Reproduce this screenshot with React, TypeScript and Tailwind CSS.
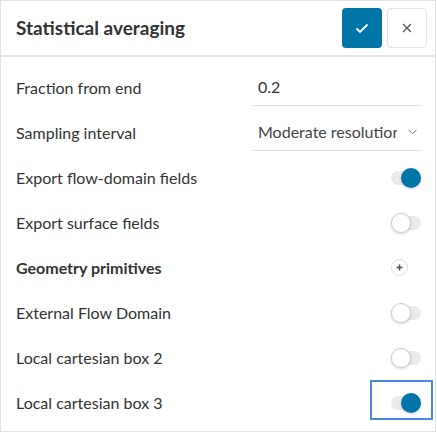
import React, { useState } from 'react';

const font = { fontFamily: 'Lato, "Noto Sans", sans-serif' };

interface ToggleProps {
  on: boolean;
  focused?: boolean;
  onChange: () => void;
}

const Toggle = ({ on, focused, onChange }: ToggleProps) => (
  <button onClick={onChange} className="relative flex h-5 w-[30px] items-center">
    <span className="absolute left-0 right-0 h-[14px] rounded-full bg-[#ebebeb]" />
    <span
      className={`absolute h-5 w-5 rounded-full shadow-[0_1px_3px_rgba(0,0,0,0.18)] ${
        on ? 'right-0 bg-[#0275a8]' : 'left-0 border border-[#cfcfcf] bg-white'
      }`}
    />
    {focused && (
      <span className="pointer-events-none absolute -left-[21px] -right-[12px] -top-[13px] -bottom-[7px] border-2 border-[#4a86e4]" />
    )}
  </button>
);

export default function App() {
  const [flow, setFlow] = useState(true);
  const [surface, setSurface] = useState(false);
  const [external, setExternal] = useState(false);
  const [box2, setBox2] = useState(false);
  const [box3, setBox3] = useState(true);

  const Row = ({ label, bold, children }: { label: string; bold?: boolean; children?: React.ReactNode }) => (
    <div className="flex h-[45px] items-center justify-between pl-[15px] pr-[14px]">
      <span className={`text-[16px] text-[#333] ${bold ? 'font-bold' : ''}`}>{label}</span>
      {children}
    </div>
  );

  return (
    <div style={font} className="h-[432px] w-[436px] border border-[#e3e3e3] bg-white">
      {/* Header */}
      <div className="flex h-14 items-center justify-between border-b-2 border-[#e6e6e6] pl-[15px] pr-2">
        <h1 className="text-[19px] font-bold text-[#333]">Statistical averaging</h1>
        <div className="flex gap-[5px]">
          <button className="flex h-10 w-10 items-center justify-center rounded bg-[#0275a8]">
            <svg width="14" height="11" viewBox="0 0 14 11" fill="none">
              <path d="M1.5 5.5L5 9L12.5 1.5" stroke="white" strokeWidth="1.8" />
            </svg>
          </button>
          <button className="flex h-10 w-10 items-center justify-center rounded border border-[#e3e3e3] bg-white">
            <svg width="10" height="10" viewBox="0 0 10 10" fill="none">
              <path d="M1 1L9 9M9 1L1 9" stroke="#555" strokeWidth="1.3" />
            </svg>
          </button>
        </div>
      </div>

      {/* Settings */}
      <div className="pt-2">
        <Row label="Fraction from end">
          <div className="flex h-9 w-[168px] items-center border-b border-[#e0e0e0] pl-[5px] text-[16px] text-[#333]">
            0.2
          </div>
        </Row>
        <Row label="Sampling interval">
          <div className="flex h-9 w-[168px] items-center border-b border-[#e0e0e0] pl-[5px] text-[16px] text-[#444]">
            <span className="w-[139px] overflow-hidden whitespace-nowrap">Moderate resolution</span>
            <svg width="9" height="6" viewBox="0 0 9 6" fill="none" className="ml-[11px]">
              <path d="M0.5 0.8L4.5 4.8L8.5 0.8" stroke="#777" strokeWidth="1" />
            </svg>
          </div>
        </Row>
        <Row label="Export flow-domain fields">
          <Toggle on={flow} onChange={() => setFlow(!flow)} />
        </Row>
        <Row label="Export surface fields">
          <Toggle on={surface} onChange={() => setSurface(!surface)} />
        </Row>
        <Row label="Geometry primitives" bold>
          <button className="mr-[13px] flex h-[17px] w-[17px] items-center justify-center rounded-full border border-[#dedede] bg-white">
            <svg width="7" height="7" viewBox="0 0 7 7">
              <path d="M3.5 0.5V6.5M0.5 3.5H6.5" stroke="#555" strokeWidth="1.6" />
            </svg>
          </button>
        </Row>
        <Row label="External Flow Domain">
          <Toggle on={external} onChange={() => setExternal(!external)} />
        </Row>
        <Row label="Local cartesian box 2">
          <Toggle on={box2} onChange={() => setBox2(!box2)} />
        </Row>
        <Row label="Local cartesian box 3">
          <Toggle on={box3} focused onChange={() => setBox3(!box3)} />
        </Row>
      </div>
    </div>
  );
}
